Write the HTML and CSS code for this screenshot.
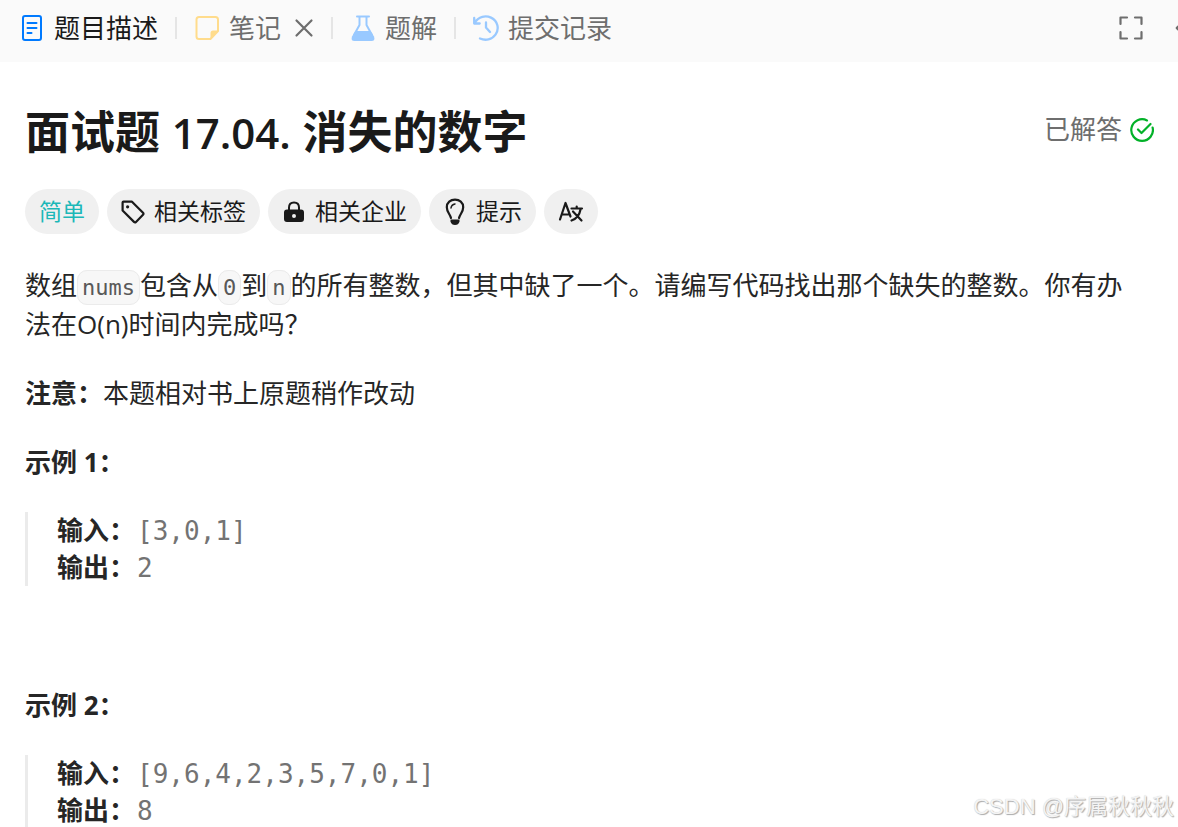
FILE: index.html
```
<!DOCTYPE html>
<html lang="zh-CN">
<head>
<meta charset="utf-8">
<meta name="viewport" content="width=device-width, initial-scale=1">
<title>面试题 17.04. 消失的数字</title>
<link rel="stylesheet" href="styles.css">
</head>
<body>
<header class="tabbar">
  <nav class="tabs">
    <button class="tab tab-active" type="button">
      <svg class="icon" viewBox="0 0 26 26" fill="none" stroke="#007aff" stroke-width="2" stroke-linecap="round"><rect x="4" y="1" width="18" height="24" rx="2"/><path d="M8.500 8h9M8.500 13h9M8.500 18h4"/></svg>
      题目描述
    </button>
    <span class="divider"></span>
    <button class="tab tab-note" type="button">
      <svg class="icon" viewBox="0 0 26 26"><path d="M5 2H21.500Q24 2 24 4.500V16L16.500 24H5Q2.500 24 2.500 21.500V4.500Q2.500 2 5 2Z" fill="none" stroke="#ffdc8c" stroke-width="2"/><path d="M24 15.500H19Q16.500 15.500 16.500 18V24.500Z" fill="#ffdc8c"/></svg>
      笔记
    </button>
    <button class="close" type="button" aria-label="关闭笔记">
      <svg viewBox="0 0 20 20" fill="none" stroke="#6e6e6e" stroke-width="2.200" stroke-linecap="round"><path d="M2.500 2.500l15 15M17.500 2.500l-15 15"/></svg>
    </button>
    <span class="divider"></span>
    <button class="tab" type="button">
      <svg class="icon" viewBox="0 0 26 26"><path d="M7 1.500H19M9.500 2V10L4 20M16.500 2V10L22 20" fill="none" stroke="#99c9ff" stroke-width="2" stroke-linecap="round"/><path d="M5.500 16H20.500L24 21.500Q25.500 26 21.500 26H4.500Q.5 26 2 21.500Z" fill="#99c9ff"/></svg>
      题解
    </button>
    <span class="divider"></span>
    <button class="tab" type="button">
      <svg class="icon" viewBox="0 0 26 26" fill="none" stroke="#99c9ff" stroke-width="2.300" stroke-linecap="round" stroke-linejoin="round"><path d="M1.200 3V8.500H6.700M1.500 8C5.500 1 13 .2 18 2.600C25 6 26.500 14 22.500 19.700C19 24.700 12.500 26 7 23.500M13 7.500V12.500L17 17"/></svg>
      提交记录
    </button>
  </nav>
  <div class="tools">
    <button class="tool" type="button" aria-label="全屏">
      <svg viewBox="0 0 24 24" fill="none" stroke="#6e6e6e" stroke-width="2.200" stroke-linecap="round" stroke-linejoin="round"><path d="M1.500 8V1.500H8M16 1.500H22.500V8M22.500 16V22.500H16M8 22.500H1.500V16"/></svg>
    </button>
    <button class="tool tool-fold" type="button" aria-label="折叠">
      <svg viewBox="0 0 16 24" fill="none" stroke="#6e6e6e" stroke-width="2.600" stroke-linecap="round" stroke-linejoin="round"><path d="M11 3L2 12L11 21"/></svg>
    </button>
  </div>
</header>
<main class="content">
  <div class="heading">
    <h1 class="title">面试题 <span class="number">17.04.</span> 消失的数字</h1>
    <div class="solved">已解答
      <svg viewBox="0 0 24 24" fill="none" stroke="#02b128" stroke-width="2.200" stroke-linecap="round" stroke-linejoin="round"><path d="M22.600 9.500A10.800 10.800 0 1 1 17 2.400M8 11.500L11.500 15L20.500 6"/></svg>
    </div>
  </div>
  <div class="tags">
    <span class="tag tag-easy">简单</span>
    <button class="tag" type="button">
      <svg class="tag-icon" viewBox="0 0 24 24"><path d="M2.500 1.700H11L22 12.700Q23 13.700 22 14.700L15 21.900Q14 22.900 13 21.900L1.600 10.500V2.600Q1.600 1.700 2.500 1.700Z" fill="none" stroke="#1a1a1a" stroke-width="2.200" stroke-linejoin="round"/><circle cx="6.600" cy="6.800" r="1.600" fill="#1a1a1a"/></svg>
      相关标签
    </button>
    <button class="tag" type="button">
      <svg class="tag-icon" viewBox="0 0 24 24"><path d="M7 11V7.500Q7 2.500 12 2.500T17 7.500V11" fill="none" stroke="#1a1a1a" stroke-width="2"/><path fill-rule="evenodd" d="M5 9.500H19Q22 9.500 22 12.500V19Q22 22 19 22H5Q2 22 2 19V12.500Q2 9.500 5 9.500ZM12 14A2 2 0 1 0 12 18A2 2 0 1 0 12 14Z" fill="#1a1a1a"/></svg>
      相关企业
    </button>
    <button class="tag" type="button">
      <svg class="tag-icon tag-bulb" viewBox="0 0 24 28"><path d="M8 20C7 16 3.800 14 3.800 9.200C3.800 4.500 7.500 1.600 12 1.600S20.200 4.500 20.200 9.200C20.200 14 17 16 16 20" fill="none" stroke="#1a1a1a" stroke-width="2.200" stroke-linecap="round"/><path d="M8 10C8.300 7.500 9.500 6.500 12 6" fill="none" stroke="#1a1a1a" stroke-width="1.500" stroke-linecap="round"/><path d="M7.500 21.500H16.500V23.500Q15.500 27 12 27T7.500 23.500Z" fill="#1a1a1a"/></svg>
      提示
    </button>
    <button class="tag" type="button" aria-label="切换语言">
      <svg class="tag-icon tag-lang" viewBox="0 0 26 22" fill="none" stroke="#1a1a1a" stroke-width="2.200" stroke-linecap="round" stroke-linejoin="round"><path d="M2 18.500L7.500 2L12.500 15.500M4 13.500H11M13.500 7.500H24M18.700 5.500V7.500M15 10.500L23.500 19.500M22.500 8.500C21.500 14 18 18 13.500 19.500"/></svg>
    </button>
  </div>
  <div class="description">
    <p>数组<code>nums</code>包含从<code>0</code>到<code>n</code>的所有整数，但其中缺了一个。请编写代码找出那个缺失的整数。你有办法在O(n)时间内完成吗？</p>
    <p><strong>注意：</strong>本题相对书上原题稍作改动</p>
    <p><strong>示例 1：</strong></p>
    <pre class="example"><strong>输入：</strong>[3,0,1]
<strong>输出：</strong>2</pre>
    <p class="next"><strong>示例 2：</strong></p>
    <pre class="example"><strong>输入：</strong>[9,6,4,2,3,5,7,0,1]
<strong>输出：</strong>8</pre>
  </div>
</main>
<div class="watermark">CSDN @序属秋秋秋</div>
</body>
</html>
```
FILE: styles.css
```
* { box-sizing: border-box; }
html { height: 100%; overflow: hidden; }
body {
  margin: 0;
  height: 100%;
  overflow: hidden;
  background: #fff;
  color: #262626;
  font-family: "Open Sans", "Noto Sans CJK SC", sans-serif;
  font-size: 26px;
  line-height: 39px;
}
button {
  margin: 0;
  padding: 0;
  border: 0;
  background: none;
  color: inherit;
  font: inherit;
  cursor: pointer;
}
svg { display: block; flex: none; }

.tabbar {
  display: flex;
  justify-content: space-between;
  align-items: center;
  height: 62px;
  padding: 0 0 6px 19px;
  background: #fafafa;
}
.tabs { display: flex; align-items: center; }
.tab {
  display: flex;
  align-items: center;
  gap: 9px;
  color: #6e6e6e;
  white-space: nowrap;
}
.tab-active { color: #1a1a1a; }
.icon { width: 26px; height: 26px; }
.close { margin-left: 13px; }
.close svg { width: 20px; height: 20px; }
.divider {
  width: 2px;
  height: 22px;
  margin: 0 17px;
  background: #e5e5e5;
}
.tools { display: flex; align-items: center; gap: 32px; }
.tool svg { width: 24px; height: 24px; }
.tool-fold { width: 3px; overflow: hidden; }
.tool-fold svg { width: 16px; }

.content { padding: 36px 24px 0 25px; }
.heading {
  display: flex;
  justify-content: space-between;
  align-items: center;
}
.title {
  margin: 0;
  color: #1a1a1a;
  font-size: 45px;
  line-height: 68px;
  font-weight: 700;
}
.number { font-size: 42px; font-weight: 600; }
.solved {
  display: flex;
  align-items: center;
  gap: 8px;
  padding-bottom: 6px;
  color: #6e6e6e;
  white-space: nowrap;
}
.solved svg { width: 24px; height: 24px; }

.tags { display: flex; flex-wrap: wrap; gap: 8px; margin-top: 22px; }
.tag {
  display: flex;
  align-items: center;
  gap: 9px;
  height: 45px;
  padding: 0 14px;
  border-radius: 23px;
  background: #f0f0f0;
  color: #1a1a1a;
  font-size: 23px;
}
.tag-easy { color: #1cb8b8; }
.tag-icon { width: 24px; height: 24px; }
.tag-bulb { height: 28px; }
.tag-lang { width: 26px; height: 22px; }

.description { padding: 32px 20px 0 0; }
.description p { margin: 0 0 30px; }
.description .next { margin-top: 100px; }
code, pre { font-family: "DejaVu Sans Mono", "Noto Sans CJK SC", monospace; }
code {
  padding: 4px;
  border: 1px solid #ebebeb;
  border-radius: 10px;
  background: #f7f7f7;
  color: #595959;
  font-size: 22px;
  line-height: 22px;
}
strong { font-family: "Open Sans", "Noto Sans CJK SC", sans-serif; font-weight: 700; }
.example {
  margin: 0;
  padding-left: 29px;
  border-left: 3px solid #ebebeb;
  color: #737373;
  line-height: 36px;
}
.example strong { margin-right: 2px; color: #262626; }
.watermark {
  position: absolute;
  right: 4px;
  bottom: 1px;
  color: #f4f4f4;
  font-family: "Liberation Sans", "Noto Sans CJK SC", sans-serif;
  font-size: 22px;
  text-shadow: 1px 1px 1px #aaa, 0 0 1px #ccc;
}
```
